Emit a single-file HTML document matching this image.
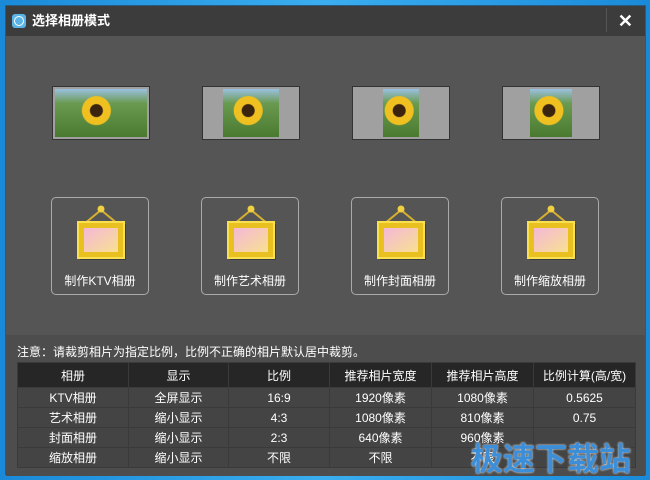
<!DOCTYPE html><html><head><meta charset="utf-8"><style>
*{margin:0;padding:0;box-sizing:border-box}
body{width:650px;height:480px;background:linear-gradient(90deg,#1a8ad8,#3aaef0 50%,#1a8ad8);font-family:"Liberation Sans","Noto Sans CJK SC",sans-serif;position:relative;overflow:hidden}
.win{position:absolute;left:5px;top:5px;width:641px;height:470px;background:#555;border:1px solid #2a5a80}
.title{position:absolute;left:0;top:0;width:100%;height:30px;background:#3c3c3c;color:#fff;font-size:13px;font-weight:bold;line-height:30px;padding-left:26px}
.ic{position:absolute;left:6px;top:8px;width:14px;height:14px;border-radius:3px;background:#5ab4e6}
.ic:after{content:"";position:absolute;left:2px;top:2px;width:8px;height:8px;border:1px solid #fff;border-radius:50%}
.x{position:absolute;right:12px;top:0;color:#fff;font-size:18px;font-weight:bold}
.sep{position:absolute;right:38px;top:2px;width:1px;height:24px;background:#555}
.pic{position:absolute;top:80px;width:98px;height:54px;background:#a0a0a0;border:1px solid #333}
.sf{position:absolute;top:2px;bottom:2px;background:radial-gradient(circle at 45% 45%,#3a2410 0 6px,#f0c020 7px 14px,transparent 15px),linear-gradient(#9ac0e0,#6a9a50 30%,#4a7a30)}
.btn{position:absolute;top:191px;width:98px;height:98px;border:1px solid #aaa;border-radius:5px;color:#fff;font-size:12px;text-align:center}
.btn span{position:absolute;left:0;right:0;top:74px}
.btn svg{position:absolute;left:20px;top:4px}
.low{position:absolute;left:0;top:329px;width:100%;height:141px;background:#4d4d4d}
.note{position:absolute;left:11px;top:337px;color:#fff;font-size:12px}
table{position:absolute;left:11px;top:356px;width:619px;border-collapse:collapse;color:#fff;font-size:12px;text-align:center}
td,th{border:1px solid #3a3a3a;height:20px;font-weight:normal;background:#444}
th{background:#262626;height:25px}
.wm{position:absolute;right:14px;top:428px;color:#3c8ed8;font-size:32px;font-weight:bold;text-shadow:0 0 2px #fff}
</style></head><body><div class="win">
<div class="title"><div class="ic"></div>选择相册模式<div class="sep"></div><div class="x">✕</div></div>
<div class="pic" style="left:46px"><div class="sf" style="left:2px;right:2px"></div></div>
<div class="pic" style="left:196px"><div class="sf" style="left:20px;right:20px"></div></div>
<div class="pic" style="left:346px"><div class="sf" style="left:30px;right:30px"></div></div>
<div class="pic" style="left:496px"><div class="sf" style="left:27px;right:27px"></div></div>
<script></script>
<div class="btn" style="left:45px"><svg width="58" height="64"><defs><linearGradient id="p" x1="0" y1="0" x2="1" y2="1"><stop offset="0" stop-color="#f4b8d8"/><stop offset="1" stop-color="#f8e090"/></linearGradient></defs><path d="M29 8 L12 22 M29 8 L46 22" stroke="#d8b030" stroke-width="2" fill="none"/><circle cx="29" cy="7" r="3.5" fill="#f0d040"/><rect x="8" y="22" width="46" height="36" fill="#222" opacity=".5"/><rect x="6" y="20" width="46" height="36" fill="#e8c020" stroke="#f8e050" stroke-width="2"/><rect x="12" y="26" width="34" height="24" fill="url(#p)"/></svg><span>制作KTV相册</span></div>
<div class="btn" style="left:195px"><svg width="58" height="64"><path d="M29 8 L12 22 M29 8 L46 22" stroke="#d8b030" stroke-width="2" fill="none"/><circle cx="29" cy="7" r="3.5" fill="#f0d040"/><rect x="8" y="22" width="46" height="36" fill="#222" opacity=".5"/><rect x="6" y="20" width="46" height="36" fill="#e8c020" stroke="#f8e050" stroke-width="2"/><rect x="12" y="26" width="34" height="24" fill="url(#p)"/></svg><span>制作艺术相册</span></div>
<div class="btn" style="left:345px"><svg width="58" height="64"><path d="M29 8 L12 22 M29 8 L46 22" stroke="#d8b030" stroke-width="2" fill="none"/><circle cx="29" cy="7" r="3.5" fill="#f0d040"/><rect x="8" y="22" width="46" height="36" fill="#222" opacity=".5"/><rect x="6" y="20" width="46" height="36" fill="#e8c020" stroke="#f8e050" stroke-width="2"/><rect x="12" y="26" width="34" height="24" fill="url(#p)"/></svg><span>制作封面相册</span></div>
<div class="btn" style="left:495px"><svg width="58" height="64"><path d="M29 8 L12 22 M29 8 L46 22" stroke="#d8b030" stroke-width="2" fill="none"/><circle cx="29" cy="7" r="3.5" fill="#f0d040"/><rect x="8" y="22" width="46" height="36" fill="#222" opacity=".5"/><rect x="6" y="20" width="46" height="36" fill="#e8c020" stroke="#f8e050" stroke-width="2"/><rect x="12" y="26" width="34" height="24" fill="url(#p)"/></svg><span>制作缩放相册</span></div>
<div class="low"></div>
<div class="note">注意：请裁剪相片为指定比例，比例不正确的相片默认居中裁剪。</div>
<table>
<tr><th style="width:111px">相册</th><th style="width:100px">显示</th><th style="width:101px">比例</th><th style="width:102px">推荐相片宽度</th><th style="width:102px">推荐相片高度</th><th>比例计算(高/宽)</th></tr>
<tr><td>KTV相册</td><td>全屏显示</td><td>16:9</td><td>1920像素</td><td>1080像素</td><td>0.5625</td></tr>
<tr><td>艺术相册</td><td>缩小显示</td><td>4:3</td><td>1080像素</td><td>810像素</td><td>0.75</td></tr>
<tr><td>封面相册</td><td>缩小显示</td><td>2:3</td><td>640像素</td><td>960像素</td><td></td></tr>
<tr><td>缩放相册</td><td>缩小显示</td><td>不限</td><td>不限</td><td>不限</td><td></td></tr>
</table>
<div class="wm">极速下载站</div>
</div></body></html>
